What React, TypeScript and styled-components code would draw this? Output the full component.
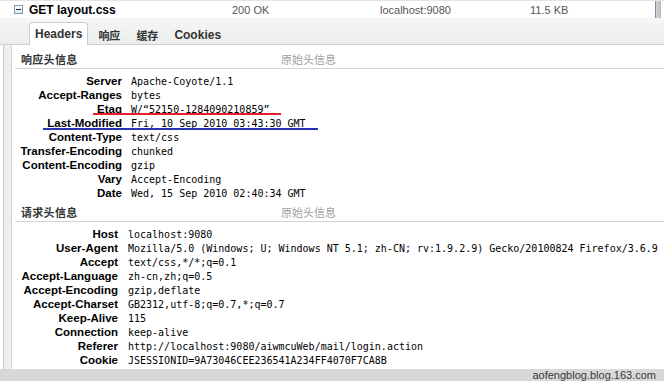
import React from 'react';
import styled, { createGlobalStyle } from 'styled-components';

const GlobalStyle = createGlobalStyle`
  html, body {
    margin: 0;
    padding: 0;
    background: #fff;
  }
  body {
    font-family: "Liberation Sans", "Noto Sans CJK SC", sans-serif;
    font-size: 11px;
    color: #000;
  }
`;

const Window = styled.div`
  width: 664px;
  height: 381px;
  overflow: hidden;
  display: flex;
  flex-direction: column;
`;

const RequestRow = styled.div`
  height: 17px;
  border-top: 1px solid #e4e4e4;
  display: grid;
  grid-template-columns: 29px 203px 148px 150px 1fr 6px;
  align-items: center;
  padding-right: 3px;
  background: #fff;
`;

const Toggle = styled.span`
  justify-self: end;
  margin-right: 6px;
  width: 7px;
  height: 7px;
  border: 1px solid #7b9ab8;
  background: linear-gradient(#ffffff, #dfe6ee);
  display: flex;
  align-items: center;
  justify-content: center;
  &::after {
    content: '';
    width: 5px;
    height: 1px;
    background: #1c2b3c;
  }
`;

const Cell = styled.span<{ $bold?: boolean }>`
  font-size: ${(p) => (p.$bold ? '12px' : '11px')};
  font-weight: ${(p) => (p.$bold ? 'bold' : 'normal')};
  color: ${(p) => (p.$bold ? '#000' : '#555')};
  white-space: nowrap;
`;

const Scroll = styled.span`
  height: 17px;
  background: linear-gradient(to right, #8a85a6 0, #8a85a6 1px, #d2d2d2 1px, #bcbcbc);
`;

const TabBar = styled.div`
  height: 26px;
  border-bottom: 1px solid #cfcfcf;
  background: linear-gradient(#f6f6f6, #eceded);
  display: flex;
  align-items: flex-end;
  gap: 4px;
  padding-left: 29px;
`;

const Tab = styled.div<{ $active?: boolean; $cjk?: boolean }>`
  margin-bottom: -1px;
  padding: 0 5px;
  display: flex;
  align-items: center;
  font-family: "Liberation Sans", "Noto Sans CJK SC", sans-serif;
  font-size: ${(p) => (p.$cjk ? '11px' : '12px')};
  font-weight: bold;
  color: #333;
  box-sizing: border-box;
  border: 1px solid ${(p) => (p.$active ? '#cbcbcb' : 'transparent')};
  border-bottom: none;
  border-radius: 4px 4px 0 0;
  background: ${(p) => (p.$active ? '#fff' : 'transparent')};
  height: ${(p) => (p.$active ? '23px' : '22px')};
`;

const Body = styled.div`
  height: 324px;
  display: flex;
  overflow: hidden;
`;

const Gutter = styled.div`
  width: 7px;
  margin-left: 3px;
  border-left: 1px solid #c9c9c9;
  background: #eeeeee;
`;

const Panel = styled.div`
  flex: 1;
  border-left: 1px solid #d2d2d2;
  background: #fff;
  padding-top: 2px;
`;

const SectionHead = styled.div`
  height: 22px;
  margin-left: 3px;
  padding-left: 6px;
  border-bottom: 1px solid #d4d4d4;
  box-sizing: border-box;
  display: grid;
  grid-template-columns: 260px 1fr;
  align-items: center;
  padding-top: 2px;
`;

const SectionTitle = styled.span`
  font-family: "Noto Sans CJK SC", sans-serif;
  font-size: 11px;
  font-weight: bold;
  color: #333;
  letter-spacing: 0.3px;
`;

const RawLink = styled.span`
  font-family: "Noto Sans CJK SC", sans-serif;
  font-size: 11px;
  color: #a0a0a0;
`;

const HeaderTable = styled.div`
  margin-top: 5px;
`;

const Row = styled.div<{ $labelWidth: number; $gap: number }>`
  position: relative;
  height: 14px;
  display: grid;
  grid-template-columns: ${(p) => p.$labelWidth}px 1fr;
  column-gap: ${(p) => p.$gap}px;
  align-items: center;
`;

const Label = styled.span`
  text-align: right;
  font-size: 11.5px;
  font-weight: bold;
  white-space: nowrap;
`;

const Value = styled.span`
  font-family: "DejaVu Sans Mono", "Liberation Mono", monospace;
  font-size: 10px;
  white-space: nowrap;
`;

const Mark = styled.span<{ $color: string; $left: number; $width: number; $bottom: number }>`
  position: absolute;
  left: ${(p) => p.$left}px;
  width: ${(p) => p.$width}px;
  bottom: ${(p) => p.$bottom}px;
  height: 2px;
  background: ${(p) => p.$color};
`;

const Footer = styled.div`
  height: 12px;
  background: #d8d8d8;
  display: flex;
  justify-content: flex-end;
  align-items: center;
  padding-right: 8px;
  font-size: 11px;
  color: #3a3a3a;
  line-height: 12px;
`;

type Header = {
  name: string;
  value: string;
  mark?: { color: string; left: number; width: number; bottom: number };
};

const responseHeaders: Header[] = [
  { name: 'Server', value: 'Apache-Coyote/1.1' },
  { name: 'Accept-Ranges', value: 'bytes' },
  {
    name: 'Etag',
    value: 'W/“52150-1284090210859”',
    mark: { color: '#e3202b', left: 81, width: 188, bottom: 1 },
  },
  {
    name: 'Last-Modified',
    value: 'Fri, 10 Sep 2010 03:43:30 GMT',
    mark: { color: '#2a32b4', left: 31, width: 275, bottom: 0 },
  },
  { name: 'Content-Type', value: 'text/css' },
  { name: 'Transfer-Encoding', value: 'chunked' },
  { name: 'Content-Encoding', value: 'gzip' },
  { name: 'Vary', value: 'Accept-Encoding' },
  { name: 'Date', value: 'Wed, 15 Sep 2010 02:40:34 GMT' },
];

const requestHeaders: Header[] = [
  { name: 'Host', value: 'localhost:9080' },
  {
    name: 'User-Agent',
    value: 'Mozilla/5.0 (Windows; U; Windows NT 5.1; zh-CN; rv:1.9.2.9) Gecko/20100824 Firefox/3.6.9',
  },
  { name: 'Accept', value: 'text/css,*/*;q=0.1' },
  { name: 'Accept-Language', value: 'zh-cn,zh;q=0.5' },
  { name: 'Accept-Encoding', value: 'gzip,deflate' },
  { name: 'Accept-Charset', value: 'GB2312,utf-8;q=0.7,*;q=0.7' },
  { name: 'Keep-Alive', value: '115' },
  { name: 'Connection', value: 'keep-alive' },
  { name: 'Referer', value: 'http://localhost:9080/aiwmcuWeb/mail/login.action' },
  { name: 'Cookie', value: 'JSESSIONID=9A73046CEE236541A234FF4070F7CA8B' },
];

const Section: React.FC<{ title: string; headers: Header[]; labelWidth: number; gap: number }> = (props) => {
  return (
    <section>
      <SectionHead>
        <SectionTitle>{props.title}</SectionTitle>
        <RawLink>原始头信息</RawLink>
      </SectionHead>
      <HeaderTable>
        {props.headers.map((h) => (
          <Row key={h.name} $labelWidth={props.labelWidth} $gap={props.gap}>
            <Label>{h.name}</Label>
            <Value>{h.value}</Value>
            {h.mark && (
              <Mark $color={h.mark.color} $left={h.mark.left} $width={h.mark.width} $bottom={h.mark.bottom} />
            )}
          </Row>
        ))}
      </HeaderTable>
    </section>
  );
};

const App: React.FC = () => {
  return (
    <Window>
      <GlobalStyle />
      <RequestRow>
        <Toggle />
        <Cell $bold>GET layout.css</Cell>
        <Cell>200 OK</Cell>
        <Cell>localhost:9080</Cell>
        <Cell>11.5 KB</Cell>
        <Scroll />
      </RequestRow>
      <TabBar>
        <Tab $active>Headers</Tab>
        <Tab $cjk>响应</Tab>
        <Tab $cjk>缓存</Tab>
        <Tab>Cookies</Tab>
      </TabBar>
      <Body>
        <Gutter />
        <Panel>
          <Section title="响应头信息" headers={responseHeaders} labelWidth={110} gap={9} />
          <Section title="请求头信息" headers={requestHeaders} labelWidth={106} gap={10} />
        </Panel>
      </Body>
      <Footer>aofengblog.blog.163.com</Footer>
    </Window>
  );
};

export default App;
